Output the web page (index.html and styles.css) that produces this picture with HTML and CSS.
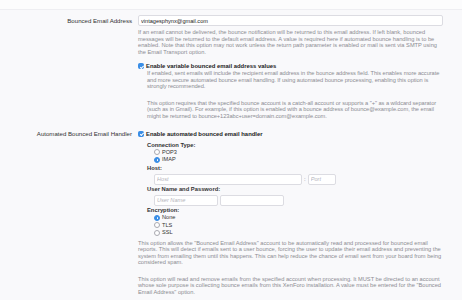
FILE: index.html
```html
<!DOCTYPE html>
<html lang="en">
<head>
  <meta charset="UTF-8">
  <meta name="viewport" content="width=device-width, initial-scale=1.0">
  <title>Email Options</title>
  <link rel="stylesheet" href="styles.css">
</head>
<body>

<div class="top-bar"></div>

<form class="options">
  <div class="option-row">
    <label class="option-label" for="bounceEmail">Bounced Email Address</label>
    <div class="option-value">
      <input type="text" class="text-box" id="bounceEmail" value="vintagesphynx@gmail.com">
      <p class="explain">If an email cannot be delivered, the bounce notification will be returned to this email address. If left blank, bounced messages will be returned to the default email address. A value is required here if automated bounce handling is to be enabled. Note that this option may not work unless the return path parameter is enabled or mail is sent via SMTP using the Email Transport option.</p>
      <label class="check"><input type="checkbox" checked> Enable variable bounced email address values</label>
      <div class="indented">
        <p class="explain">If enabled, sent emails will include the recipient email address in the bounce address field. This enables more accurate and more secure automated bounce email handling. If using automated bounce processing, enabling this option is strongly recommended.</p>
        <p class="explain spaced">This option requires that the specified bounce account is a catch-all account or supports a "+" as a wildcard separator (such as in Gmail). For example, if this option is enabled with a bounce address of bounce@example.com, the email might be returned to bounce+123abc+user=domain.com@example.com.</p>
      </div>
    </div>
  </div>

  <div class="option-row">
    <label class="option-label">Automated Bounced Email Handler</label>
    <div class="option-value">
      <label class="check"><input type="checkbox" checked> Enable automated bounced email handler</label>
      <dl class="sub-options">
        <dt>Connection Type:</dt>
        <dd>
          <label class="radio"><input type="radio" name="type"> POP3</label>
          <label class="radio"><input type="radio" name="type" checked> IMAP</label>
        </dd>
        <dt>Host:</dt>
        <dd class="inline-boxes">
          <input type="text" class="text-box small host" placeholder="Host">
          <span class="colon">:</span>
          <input type="text" class="text-box small port" placeholder="Port">
        </dd>
        <dt>User Name and Password:</dt>
        <dd class="inline-boxes">
          <input type="text" class="text-box small user" placeholder="User Name">
          <input type="password" class="text-box small user">
        </dd>
        <dt>Encryption:</dt>
        <dd>
          <label class="radio"><input type="radio" name="enc" checked> None</label>
          <label class="radio"><input type="radio" name="enc"> TLS</label>
          <label class="radio"><input type="radio" name="enc"> SSL</label>
        </dd>
      </dl>
      <p class="explain">This option allows the "Bounced Email Address" account to be automatically read and processed for bounced email reports. This will detect if emails sent to a user bounce, forcing the user to update their email address and preventing the system from emailing them until this happens. This can help reduce the chance of email sent from your board from being considered spam.</p>
      <p class="explain spaced">This option will read and remove emails from the specified account when processing. It MUST be directed to an account whose sole purpose is collecting bounce emails from this XenForo installation. A value must be entered for the "Bounced Email Address" option.</p>
    </div>
  </div>
</form>

</body>
</html>
```

FILE: styles.css
```css
body {
  margin: 0;
  font-family: "Liberation Sans", Arial, sans-serif;
  background-color: #f9f9fb;
  color: #333;
}
.top-bar {
  height: 9px;
  background-color: #fcfcfd;
  border-bottom: 1px solid #eeeef2;
}
.options {
  padding-top: 5px;
}
.option-row {
  display: grid;
  grid-template-columns: 132px 305px;
  column-gap: 6px;
  margin-bottom: 9px;
}
.option-label {
  text-align: right;
  font-size: 6.1px;
  line-height: 11px;
  color: #333;
}
.option-value > .check:first-child {
  line-height: 8px;
  margin-top: 1.5px;
}
.text-box {
  display: block;
  box-sizing: border-box;
  width: 305px;
  height: 11px;
  padding: 0 2px;
  border: 1px solid #dcdce2;
  border-radius: 2px;
  background-color: white;
  font-family: inherit;
  font-size: 5.6px;
  color: #222;
  outline: none;
}
.text-box::placeholder {
  font-style: italic;
  color: #b4b4bc;
}
.explain {
  margin: 3px 0 0;
  font-size: 5.7px;
  line-height: 6.5px;
  color: #8c8c92;
}
.explain.spaced {
  margin-top: 10px;
}
.check {
  display: flex;
  align-items: center;
  gap: 2px;
  margin-top: 7px;
  font-size: 5.9px;
  line-height: 8px;
  font-weight: bold;
  color: #222;
}
.indented {
  padding-left: 9px;
}
.indented .explain {
  letter-spacing: -0.05px;
}
.indented .explain:first-child {
  margin-top: 0;
}
input[type="checkbox"],
input[type="radio"] {
  appearance: none;
  position: relative;
  width: 6px;
  height: 6px;
  margin: 0;
  flex-shrink: 0;
  box-sizing: border-box;
  border: 0.6px solid #a9a9b0;
  background-color: white;
}
input[type="checkbox"] {
  border-radius: 1.5px;
}
input[type="radio"] {
  border-radius: 50%;
}
input[type="checkbox"]:checked,
input[type="radio"]:checked {
  border-color: #3a8ee6;
  background-color: #3a8ee6;
}
input[type="checkbox"]:checked::after {
  content: "";
  position: absolute;
  left: 1.7px;
  top: 0.6px;
  width: 1.4px;
  height: 2.8px;
  border: solid white;
  border-width: 0 0.8px 0.8px 0;
  transform: rotate(45deg);
}
input[type="radio"]:checked::after {
  content: "";
  position: absolute;
  left: 1.6px;
  top: 1.6px;
  width: 1.6px;
  height: 1.6px;
  border-radius: 50%;
  background-color: white;
}
.sub-options {
  margin: 4px 0 0 9px;
}
.sub-options dt {
  font-size: 5.8px;
  line-height: 7px;
  font-weight: bold;
  color: #333;
}
.sub-options dd {
  margin: 0 0 1.5px 7px;
}
.radio {
  display: flex;
  align-items: center;
  gap: 2px;
  font-size: 5.6px;
  line-height: 7.5px;
  color: #333;
}
.inline-boxes {
  display: flex;
  align-items: center;
  gap: 2px;
  padding-top: 1.5px;
}
.inline-boxes .host {
  width: 148px;
}
.inline-boxes .port {
  width: 28px;
}
.inline-boxes .user {
  width: 64px;
}
.colon {
  font-size: 6px;
  color: #777;
}
```
